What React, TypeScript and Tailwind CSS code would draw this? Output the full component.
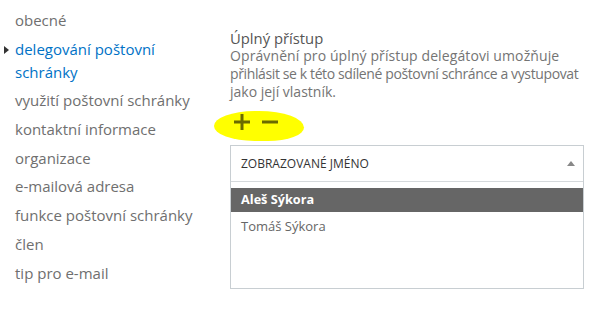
import React from "react";

const navItems = [
  "obecné",
  "delegování poštovní schránky",
  "využití poštovní schránky",
  "kontaktní informace",
  "organizace",
  "e-mailová adresa",
  "funkce poštovní schránky",
  "člen",
  "tip pro e-mail",
];

export default function App() {
  return (
    <div
      className="w-[612px] h-[310px] bg-white flex overflow-hidden"
      style={{ fontFamily: '"Open Sans", "Noto Sans", sans-serif' }}
    >
      <nav className="w-[230px] pt-[9px] flex flex-col gap-[5.7px]">
        {navItems.map((item, i) => (
          <div key={item} className="relative pl-[15px] pr-[20px]">
            {i === 1 && (
              <span className="absolute left-[4px] top-[8px] w-0 h-0 border-y-[4px] border-y-transparent border-l-[5px] border-l-[#333]" />
            )}
            <span
              className={
                "text-[15px] leading-[23px] block " +
                (i === 1 ? "text-[#0072c6]" : "text-[#6f6f6f]")
              }
            >
              {item}
            </span>
          </div>
        ))}
      </nav>
      <div className="pt-[29px] flex flex-col w-[354px]">
        <div className="text-[14.8px] leading-[18px] text-[#555]">Úplný přístup</div>
        <div className="text-[14px] leading-[18px] text-[#747474] whitespace-nowrap flex flex-col">
          <span className="tracking-[0.1px]">Oprávnění pro úplný přístup delegátovi umožňuje</span>
          <span className="tracking-[-0.38px]">přihlásit se k této sdílené poštovní schránce a vystupovat</span>
          <span>jako její vlastník.</span>
        </div>
        <div className="relative h-[44px]">
          <div className="absolute left-[-16px] top-[10px] w-[90px] h-[30px] bg-[#ffff00] rounded-[45%_50%_40%_45%/50%_55%_45%_50%]" />
          <div className="absolute left-[3px] top-[12px] flex items-center gap-[10px]">
            <svg width="18" height="18" viewBox="0 0 18 18">
              <path d="M9 1v16M1 9h16" stroke="#6b6b00" strokeWidth="3" />
            </svg>
            <svg width="18" height="18" viewBox="0 0 18 18">
              <path d="M1 9h16" stroke="#6b6b00" strokeWidth="3" />
            </svg>
          </div>
        </div>
        <div className="border border-[#c8ced2] h-[144px] flex flex-col">
          <div className="h-[36px] border-b border-[#d5d9dc] flex items-center justify-between pl-[10px] pr-[8px]">
            <span className="text-[12px] text-[#333]">ZOBRAZOVANÉ JMÉNO</span>
            <span className="w-0 h-0 border-x-[4px] border-x-transparent border-b-[5px] border-b-[#888]" />
          </div>
          <div className="mt-[6px] h-[24px] bg-[#666666] flex items-center px-[10px]">
            <span className="text-[12.7px] font-bold text-white">Aleš Sýkora</span>
          </div>
          <div className="h-[30px] flex items-center px-[10px]">
            <span className="text-[13px] text-[#666]">Tomáš Sýkora</span>
          </div>
        </div>
      </div>
    </div>
  );
}
